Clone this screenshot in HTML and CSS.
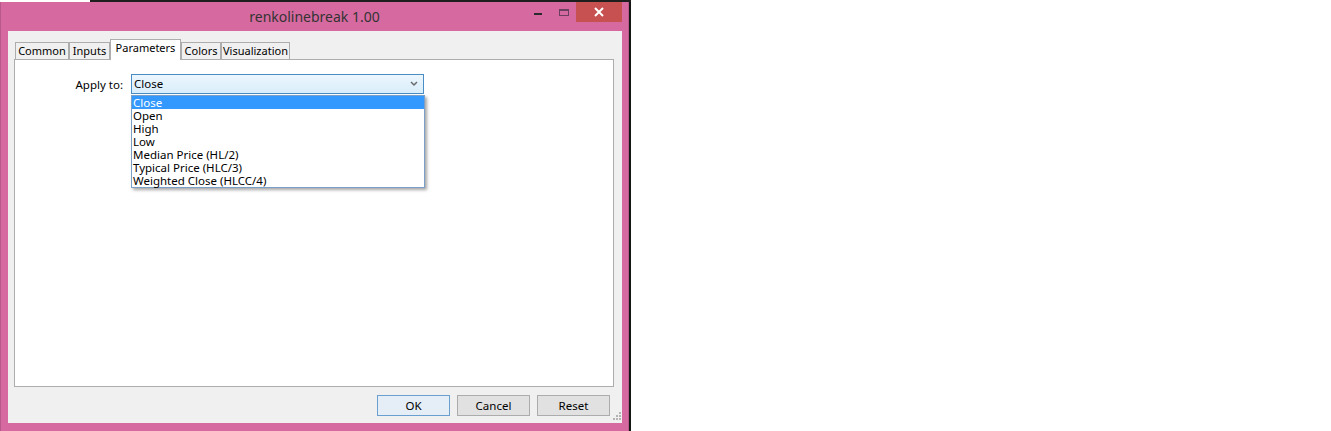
FILE: index.html
```html
<!DOCTYPE html>
<html>
<head>
<meta charset="utf-8">
<link rel="stylesheet" href="styles.css">
</head>
<body>
<div class="screen">
  <div class="topstrip"></div>
  <div class="row">
    <div class="window">
      <div class="titlebar">
        <div class="title">renkolinebreak 1.00</div>
        <div class="controls">
          <div class="ctl min"><svg width="26" height="20" viewBox="0 0 26 20"><rect x="9" y="11" width="8" height="2" fill="#2a2a2a"/></svg></div>
          <div class="ctl max"><svg width="25" height="20" viewBox="0 0 25 20"><rect x="8.5" y="7.5" width="9" height="6" fill="none" stroke="#6c3f60" stroke-width="1"/><rect x="8" y="7" width="10" height="2" fill="#6c3f60"/></svg></div>
          <div class="ctl close"><svg width="46" height="20" viewBox="0 0 46 20"><path d="M19 6 L27 14 M27 6 L19 14" stroke="#fff" stroke-width="2"/></svg></div>
        </div>
      </div>
      <div class="client">
        <div class="tabs">
          <div class="tab t-common">Common</div>
          <div class="tab t-inputs">Inputs</div>
          <div class="tab t-params active">Parameters</div>
          <div class="tab t-colors">Colors</div>
          <div class="tab t-vis">Visualization</div>
        </div>
        <div class="panel">
          <div class="field">
            <div class="label">Apply to:</div>
            <div class="combo">
              <div class="combo-box">
                <span>Close</span>
                <svg class="chev" width="8" height="6" viewBox="0 0 8 6"><polyline points="1,1 4,4 7,1" fill="none" stroke="#6a6a6a" stroke-width="1.5"/></svg>
              </div>
              <ul class="list">
                <li class="sel">Close</li>
                <li>Open</li>
                <li>High</li>
                <li>Low</li>
                <li>Median Price (HL/2)</li>
                <li>Typical Price (HLC/3)</li>
                <li>Weighted Close (HLCC/4)</li>
              </ul>
            </div>
          </div>
        </div>
        <div class="buttons">
          <button class="btn default">OK</button>
          <button class="btn">Cancel</button>
          <button class="btn">Reset</button>
        </div>
        <svg class="grip" width="8" height="8" viewBox="0 0 8 8">
          <rect x="6" y="0" width="2" height="2" fill="#b4b4b4"/>
          <rect x="3" y="3" width="2" height="2" fill="#b4b4b4"/>
          <rect x="6" y="3" width="2" height="2" fill="#b4b4b4"/>
          <rect x="0" y="6" width="2" height="2" fill="#b4b4b4"/>
          <rect x="3" y="6" width="2" height="2" fill="#b4b4b4"/>
          <rect x="6" y="6" width="2" height="2" fill="#b4b4b4"/>
        </svg>
      </div>
    </div>
    <div class="edge"></div>
  </div>
</div>
</body>
</html>
```

FILE: styles.css
```css
html, body {
  margin: 0;
  padding: 0;
  background: #ffffff;
}
body {
  font-family: "Noto Sans", "Liberation Sans", sans-serif;
  font-size: 11px;
  color: #000;
}
.screen {
  width: 1331px;
  height: 431px;
  overflow: hidden;
}
.topstrip {
  width: 631px;
  height: 2px;
  background: linear-gradient(to right, #ffffff 0, #ffffff 90px, #1e1e1e 90px);
}
.row {
  display: flex;
  height: 429px;
}
.window {
  width: 629px;
  height: 429px;
  background: #d66aa0;
  display: flex;
  flex-direction: column;
  box-shadow: inset 1px 0 #b9588b, inset -1px 0 #b9588b;
}
.edge {
  width: 2px;
  background: #161616;
}
.titlebar {
  height: 29px;
  display: grid;
  grid-template-columns: 1fr auto 1fr;
}
.title {
  grid-column: 2;
  font-size: 14px;
  color: #333333;
  line-height: 30px;
  white-space: nowrap;
}
.controls {
  grid-column: 3;
  justify-self: end;
  align-self: start;
  display: flex;
  margin-right: 7px;
}
.ctl {
  height: 20px;
  display: flex;
}
.ctl.min { width: 26px; }
.ctl.max { width: 25px; }
.ctl.close {
  width: 46px;
  background: #c75050;
}
.client {
  position: relative;
  box-sizing: border-box;
  margin: 0 7px 0 8px;
  height: 392px;
  background: #f0f0f0;
  padding-top: 8px;
  display: flex;
  flex-direction: column;
}
.tabs {
  display: flex;
  align-items: flex-end;
  height: 21px;
  margin-bottom: -1px;
  padding-left: 7px;
}
.tab {
  box-sizing: border-box;
  height: 18px;
  border: 1px solid #adadad;
  background: #f0f0f0;
  text-align: center;
  line-height: 15px;
  white-space: nowrap;
  color: #000;
}
.tab.active {
  position: relative;
  z-index: 1;
  height: 21px;
  background: #ffffff;
  border-bottom: none;
  line-height: 16px;
}
.t-common { width: 54px; }
.t-inputs { width: 41px; }
.t-params { width: 71px; }
.t-colors { width: 40px; }
.t-vis { width: 69px; }
.panel {
  box-sizing: border-box;
  margin: 0 8px 0 6px;
  height: 328px;
  border: 1px solid #adadad;
  background: #ffffff;
  padding-top: 14px;
  font-size: 11.5px;
}
.field {
  display: flex;
  align-items: center;
  height: 20px;
}
.label {
  width: 108px;
  margin-right: 8px;
  text-align: right;
  color: #000;
}
.combo {
  position: relative;
  width: 293px;
  height: 20px;
}
.combo-box {
  box-sizing: border-box;
  height: 20px;
  border: 1px solid #4a8cc4;
  background: linear-gradient(#ecf6fd, #d8eefb);
  padding-left: 2px;
  padding-right: 5px;
  line-height: 18px;
  display: flex;
  align-items: center;
  justify-content: space-between;
}
.list {
  position: absolute;
  left: 0;
  top: 21px;
  z-index: 2;
  box-sizing: border-box;
  width: 294px;
  margin: 0;
  padding: 0;
  list-style: none;
  background: #ffffff;
  border: 1px solid #7aa0c8;
  box-shadow: 2px 2px 3px rgba(0, 0, 0, 0.35);
}
.list li {
  height: 13px;
  line-height: 13px;
  padding-left: 1px;
  white-space: nowrap;
}
.list li.sel {
  background: #3399ff;
  color: #ffffff;
}
.buttons {
  display: flex;
  justify-content: flex-end;
  gap: 7px;
  margin-top: 8px;
  padding-right: 12px;
}
.btn {
  box-sizing: border-box;
  width: 73px;
  height: 21px;
  border: 1px solid #acacac;
  background: #e1e1e1;
  font-family: inherit;
  font-size: 11.5px;
  color: #000;
  padding: 0;
  margin: 0;
}
.btn.default {
  border-color: #6aa0d0;
  background: #e5eef7;
}
.grip {
  position: absolute;
  right: 1px;
  bottom: 3px;
}
```
